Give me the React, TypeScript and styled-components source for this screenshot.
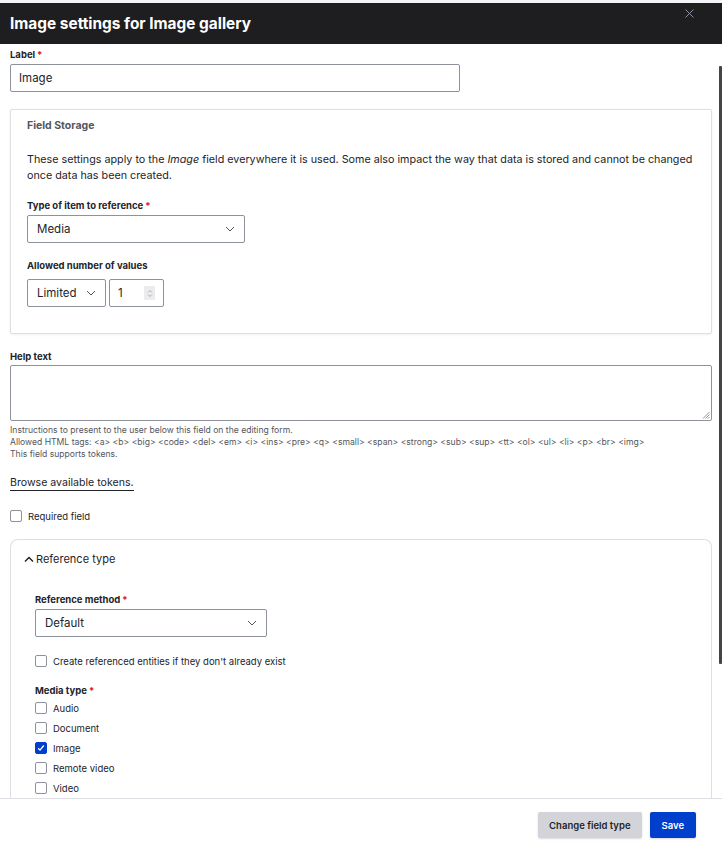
import styled, { createGlobalStyle } from 'styled-components';

const Global = createGlobalStyle`
  html, body {
    margin: 0;
    padding: 0;
    background: #f3f4f9;
    font-family: Inter, "Noto Sans", sans-serif;
    color: #232429;
  }
  * { box-sizing: border-box; }
`;

const mediaTypes = [
  { name: 'Audio', checked: false },
  { name: 'Document', checked: false },
  { name: 'Image', checked: true },
  { name: 'Remote video', checked: false },
  { name: 'Video', checked: false },
];

const allowedTags =
  'Allowed HTML tags: <a> <b> <big> <code> <del> <em> <i> <ins> <pre> <q> <small> <span> <strong> <sub> <sup> <tt> <ol> <ul> <li> <p> <br> <img>';

function Chevron() {
  return (
    <svg width="10" height="6" viewBox="0 0 10 6">
      <path d="M1 1l4 4 4-4" fill="none" stroke="#545560" strokeWidth="1" />
    </svg>
  );
}

function CheckBox({ checked }: { checked?: boolean }) {
  return (
    <Box $checked={checked}>
      {checked && (
        <svg width="8" height="8" viewBox="0 0 8 8">
          <path d="M1.2 4.3l1.8 1.8 3.8-4.6" fill="none" stroke="#fff" strokeWidth="1.3" />
        </svg>
      )}
    </Box>
  );
}

export default function App() {
  return (
    <Page>
      <Global />
      <Dialog>
        <Header>
          <Title>Image settings for Image gallery</Title>
          <Close aria-label="Close">
            <svg width="9" height="9" viewBox="0 0 9 9">
              <path d="M0.5 0.5l8 8M8.5 0.5l-8 8" stroke="#8e929c" strokeWidth="1" />
            </svg>
          </Close>
        </Header>

        <Body>
          <Scrollbar />
          <Field>
            <Label>
              Label<Req>*</Req>
            </Label>
            <TextInput $width={450}>Image</TextInput>
          </Field>

          <Card>
            <CardTitle>Field Storage</CardTitle>
            <Para>
              These settings apply to the <em>Image</em> field everywhere it is used. Some also impact the way
              that data is stored and cannot be changed once data has been created.
            </Para>
            <Field $top={16}>
              <Label>
                Type of item to reference<Req>*</Req>
              </Label>
              <Select $width={218}>
                Media
                <Chevron />
              </Select>
            </Field>
            <Field $top={17}>
              <Label $gap={7}>Allowed number of values</Label>
              <InlineRow>
                <Select $width={79}>
                  Limited
                  <Chevron />
                </Select>
                <NumberInput>
                  1
                  <Spinner>
                    <svg width="6" height="9" viewBox="0 0 6 9">
                      <path d="M1 3.5l2-2 2 2M1 5.5l2 2 2-2" fill="none" stroke="#9a9ca4" strokeWidth="0.8" />
                    </svg>
                  </Spinner>
                </NumberInput>
              </InlineRow>
            </Field>
          </Card>

          <Field $top={17}>
            <Label $gap={2}>Help text</Label>
            <TextArea>
              <Grip>
                <svg width="8" height="8" viewBox="0 0 8 8">
                  <path d="M7.5 1L1 7.5M7.5 3.5L3.5 7.5M7.5 6L6 7.5" stroke="#777" strokeWidth="0.8" />
                </svg>
              </Grip>
            </TextArea>
            <Description>
              <div>Instructions to present to the user below this field on the editing form.</div>
              <div>{allowedTags}</div>
              <div>This field supports tokens.</div>
            </Description>
          </Field>

          <TokenLink href="#">Browse available tokens.</TokenLink>

          <CheckRow $top={17}>
            <CheckBox />
            <CheckLabel>Required field</CheckLabel>
          </CheckRow>

          <Details>
            <Summary>
              <svg width="10" height="7" viewBox="0 0 10 7">
                <path d="M1 5.5l4-4 4 4" fill="none" stroke="#232429" strokeWidth="1.5" />
              </svg>
              Reference type
            </Summary>
            <DetailsContent>
              <Field>
                <Label>
                  Reference method<Req>*</Req>
                </Label>
                <Select $width={232}>
                  Default
                  <Chevron />
                </Select>
              </Field>
              <CheckRow $top={14}>
                <CheckBox />
                <CheckLabel>Create referenced entities if they don't already exist</CheckLabel>
              </CheckRow>
              <Field $top={14}>
                <Label $gap={0}>
                  Media type<Req>*</Req>
                </Label>
                <CheckList>
                  {mediaTypes.map((m) => (
                    <CheckRow key={m.name}>
                      <CheckBox checked={m.checked} />
                      <CheckLabel>{m.name}</CheckLabel>
                    </CheckRow>
                  ))}
                </CheckList>
              </Field>
            </DetailsContent>
          </Details>
        </Body>

        <Footer>
          <Button>Change field type</Button>
          <Button $primary>Save</Button>
        </Footer>
      </Dialog>
    </Page>
  );
}

const Page = styled.div`
  padding-top: 3px;
  height: 851px;
  overflow: hidden;
`;

const Dialog = styled.div`
  background: #fff;
  height: 848px;
  display: flex;
  flex-direction: column;
`;

const Header = styled.header`
  height: 41px;
  background: #1e1e20;
  display: flex;
  align-items: center;
  justify-content: space-between;
  padding: 0 10px;
  flex-shrink: 0;
`;

const Title = styled.h1`
  margin: 0;
  color: #fff;
  font-size: 15.4px;
  font-weight: 700;
  padding-bottom: 1px;
`;

const Close = styled.span`
  align-self: flex-start;
  margin-top: 6px;
  margin-right: 18px;
  display: flex;
`;

const Body = styled.div`
  position: relative;
  flex: 1;
  overflow: hidden;
  padding: 5px 10px 0 10px;
  display: flex;
  flex-direction: column;
`;

const Scrollbar = styled.div`
  position: absolute;
  right: 0;
  top: 22px;
  width: 3px;
  height: 598px;
  background: #454545;
  border-radius: 1px;
`;

const Field = styled.div<{ $top?: number }>`
  display: flex;
  flex-direction: column;
  margin-top: ${(p) => p.$top ?? 0}px;
`;

const Label = styled.label<{ $gap?: number }>`
  font-size: 9.5px;
  font-weight: 700;
  line-height: 12px;
  margin-bottom: ${(p) => p.$gap ?? 3}px;
  color: #232429;
`;

const Req = styled.span`
  color: #dc2323;
  margin-left: 2px;
`;

const TextInput = styled.div<{ $width: number }>`
  width: ${(p) => p.$width}px;
  height: 28px;
  border: 1px solid #8e929c;
  border-radius: 2px;
  padding: 0 8px;
  display: flex;
  align-items: center;
  font-size: 11.5px;
`;

const Select = styled.div<{ $width: number }>`
  width: ${(p) => p.$width}px;
  height: 28px;
  border: 1px solid #8e929c;
  border-radius: 2px;
  padding: 0 9px 0 9px;
  display: flex;
  align-items: center;
  justify-content: space-between;
  font-size: 11.5px;
`;

const InlineRow = styled.div`
  display: flex;
  gap: 3px;
`;

const NumberInput = styled.div`
  width: 55px;
  height: 28px;
  border: 1px solid #8e929c;
  border-radius: 2px;
  padding: 0 8px;
  display: flex;
  align-items: center;
  justify-content: space-between;
  font-size: 11.5px;
`;

const Spinner = styled.span`
  width: 11px;
  height: 14px;
  background: #ececef;
  display: flex;
  align-items: center;
  justify-content: center;
`;

const Card = styled.section`
  margin-top: 17px;
  border: 1px solid #dedfe4;
  border-radius: 2px;
  box-shadow: 0 1px 3px rgba(0, 0, 0, 0.06);
  padding: 9px 16px 26px 16px;
  display: flex;
  flex-direction: column;
`;

const CardTitle = styled.h2`
  margin: 0;
  font-size: 10.5px;
  font-weight: 700;
  color: #55565b;
  line-height: 13px;
`;

const Para = styled.p`
  margin: 20px 0 0 0;
  font-size: 10.75px;
  line-height: 16px;
  color: #232429;
`;

const TextArea = styled.div`
  position: relative;
  height: 56px;
  border: 1px solid #8e929c;
  border-radius: 2px;
`;

const Grip = styled.span`
  position: absolute;
  right: 1px;
  bottom: 1px;
  display: flex;
`;

const Description = styled.div`
  margin-top: 3px;
  font-size: 8.6px;
  line-height: 12px;
  color: #55565b;
`;

const TokenLink = styled.a`
  align-self: flex-start;
  margin-top: 16px;
  font-size: 10.6px;
  line-height: 14px;
  color: #232429;
  text-decoration: none;
  border-bottom: 1px solid #232429;
`;

const CheckRow = styled.div<{ $top?: number }>`
  display: flex;
  align-items: center;
  gap: 6px;
  height: 20px;
  margin-top: ${(p) => p.$top ?? 0}px;
`;

const Box = styled.span<{ $checked?: boolean }>`
  width: 12px;
  height: 12px;
  border: 1px solid ${(p) => (p.$checked ? '#003ecc' : '#8e929c')};
  background: ${(p) => (p.$checked ? '#003ecc' : '#fff')};
  border-radius: 2px;
  display: flex;
  align-items: center;
  justify-content: center;
  flex-shrink: 0;
`;

const CheckLabel = styled.span`
  font-size: 9.5px;
  color: #232429;
`;

const Details = styled.section`
  margin-top: 15px;
  border: 1px solid #dedfe4;
  border-bottom: none;
  border-radius: 8px 8px 0 0;
  flex: 1;
`;

const Summary = styled.div`
  display: flex;
  align-items: center;
  gap: 2px;
  padding: 12px 13px 11px 13px;
  font-size: 11px;
  color: #232429;
`;

const DetailsContent = styled.div`
  padding: 17px 24px 0 24px;
  display: flex;
  flex-direction: column;
`;

const CheckList = styled.div`
  display: flex;
  flex-direction: column;
  margin-top: 1px;
`;

const Footer = styled.footer`
  flex-shrink: 0;
  height: 53px;
  border-top: 1px solid #dedfe4;
  display: flex;
  align-items: center;
  justify-content: flex-end;
  gap: 8px;
  padding: 0 26px 0 0;
`;

const Button = styled.button<{ $primary?: boolean }>`
  height: 26px;
  border: none;
  border-radius: 2px;
  padding: 0 ${(p) => (p.$primary ? 12 : 11)}px;
  font-family: Inter, "Noto Sans", sans-serif;
  font-size: 9.5px;
  font-weight: 600;
  background: ${(p) => (p.$primary ? '#003ecc' : '#d3d4d9')};
  color: ${(p) => (p.$primary ? '#fff' : '#232429')};
  box-shadow: 0 1px 2px rgba(0, 0, 0, 0.15);
`;
